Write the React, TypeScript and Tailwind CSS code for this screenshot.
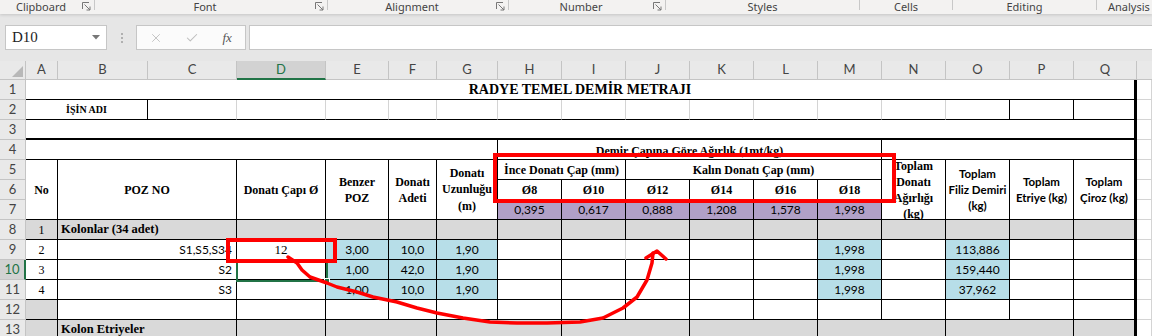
import type { ReactNode } from "react";
import { Check, X } from "lucide-react";
import { twMerge } from "tailwind-merge";

const SERIF = "font-['Liberation_Serif',serif]";
const SANS = "font-['Lato',sans-serif]";
const BLK = "border-r-black border-b-black";
const THICK = "border-b-black border-r-[3px] border-r-black";
const HDR = "font-bold text-[12px]";

const COLS = ["A", "B", "C", "D", "E", "F", "G", "H", "I", "J", "K", "L", "M", "N", "O", "P", "Q"];

function Cell({ className = "", children }: { className?: string; children?: ReactNode }) {
  return (
    <div
      className={twMerge(
        "flex min-w-0 items-center justify-center overflow-hidden whitespace-nowrap border-b border-r border-[#d4d4d4] text-black",
        className
      )}
    >
      {children}
    </div>
  );
}

function RowHead({ n, active = false }: { n: number; active?: boolean }) {
  return (
    <div
      className={twMerge(
        `flex items-center justify-center border-b border-r border-[#c4c4c4] bg-[#e9e9e9] text-[13px] text-[#444] ${SANS}`,
        active && "border-r-2 border-r-[#217346] bg-[#d2d2d2] text-[#217346]"
      )}
    >
      {n}
    </div>
  );
}

function Launcher() {
  return (
    <svg width="9" height="9" viewBox="0 0 9 9" className="shrink-0 text-[#777]">
      <path d="M0.5 7V0.5H7" fill="none" stroke="currentColor" />
      <path d="M2.5 2.5L8 8M8 4.5V8H4.5" fill="none" stroke="currentColor" />
    </svg>
  );
}

function Group({ label, w, launcher = true, last = false }: { label: string; w: string; launcher?: boolean; last?: boolean }) {
  return (
    <div className={`flex h-full items-start ${w}`}>
      <span className={`flex-1 leading-[13px] ${last ? "pl-[11px] text-left" : "text-center"}`}>{label}</span>
      {launcher && (
        <span className="mr-[3px] mt-[2px] flex">
          <Launcher />
        </span>
      )}
      {!last && <span className="h-[10px] w-px bg-[#c8c8c8]" />}
    </div>
  );
}

const dataRows = [
  { n: 9, no: "2", poz: "S1,S5,S34", cap: "12", benzer: "3,00", adet: "10,0", uz: "1,90", m: "1,998", o: "113,886" },
  { n: 10, no: "3", poz: "S2", cap: "", benzer: "1,00", adet: "42,0", uz: "1,90", m: "1,998", o: "159,440" },
  { n: 11, no: "4", poz: "S3", cap: "", benzer: "1,00", adet: "10,0", uz: "1,90", m: "1,998", o: "37,962" },
];

const BLUE = "bg-[#b7dee8]";
const GRAY = "bg-[#d9d9d9]";
const MIDCOLS = ["D", "E", "F", "G", "H", "I", "J", "K", "L", "M", "N", "O", "P"];

export default function App() {
  return (
    <div className={`relative h-[336px] w-[1152px] overflow-hidden bg-white ${SANS}`}>
      {/* ribbon group labels */}
      <div className="relative z-10 flex h-[14px] bg-[#f3f2f1] font-['Noto_Sans',sans-serif] text-[11px] text-[#444] shadow-[0_1px_3px_rgba(0,0,0,0.15)]">
        <Group label="Clipboard" w="w-[95px]" />
        <Group label="Font" w="w-[233px]" />
        <Group label="Alignment" w="w-[181px]" />
        <Group label="Number" w="w-[157px]" />
        <Group label="Styles" w="w-[194px]" launcher={false} />
        <Group label="Cells" w="w-[93px]" launcher={false} />
        <Group label="Editing" w="w-[144px]" launcher={false} />
        <Group label="Analysis" w="flex-1" launcher={false} last />
      </div>

      {/* formula bar */}
      <div className="flex h-[47px] items-start bg-[#e6e6e6] pt-[11px]">
        <div className="ml-[5px] flex h-[25px] w-[102px] items-center justify-between border border-[#c6c6c6] bg-white pl-[6px] pr-[6px]">
          <span className={`${SERIF} text-[15px] text-[#222]`}>D10</span>
          <svg width="8" height="5" viewBox="0 0 8 5"><path d="M0 0H8L4 4.5Z" fill="#777" /></svg>
        </div>
        <div className="ml-[14px] mt-[8px] flex flex-col gap-[2px]">
          <span className="h-[2px] w-[2px] bg-[#b0b0b0]" />
          <span className="h-[2px] w-[2px] bg-[#b0b0b0]" />
          <span className="h-[2px] w-[2px] bg-[#b0b0b0]" />
        </div>
        <div className="ml-[13px] flex h-[25px] w-[110px] items-center border border-[#c6c6c6] bg-[#fbfbfb] pl-[1px]">
          <span className="flex w-[36px] justify-center"><X size={14} strokeWidth={1.5} color="#bdbdbd" /></span>
          <span className="flex w-[36px] justify-center"><Check size={14} strokeWidth={1.8} color="#bdbdbd" /></span>
          <span className={`flex w-[36px] justify-center ${SERIF} text-[13px] italic text-[#555]`}>fx</span>
        </div>
        <div className="ml-[3px] h-[25px] flex-1 border border-r-0 border-[#c6c6c6] bg-white" />
      </div>

      {/* sheet */}
      <div className="grid grid-cols-[26px_32px_90px_89px_89px_63px_48px_61px_64px_64px_64px_64px_64px_64px_64px_64px_64px_63px_15px] grid-rows-[19px_repeat(13,20px)]">
        {/* column headers */}
        <div className="relative border-b border-r border-[#c4c4c4] bg-[#e9e9e9]">
          <svg width="11" height="11" viewBox="0 0 11 11" className="absolute bottom-[2px] right-[2px]">
            <path d="M11 0V11H0Z" fill="#b8b8b8" />
          </svg>
        </div>
        {COLS.map((c) => (
          <div
            key={c}
            className={twMerge(
              "flex items-center justify-center border-b border-r border-[#c4c4c4] bg-[#e9e9e9] text-[13px] text-[#444]",
              c === "D" && "border-b-2 border-b-[#217346] bg-[#d2d2d2] text-[#217346]"
            )}
          >
            {c}
          </div>
        ))}
        <div className="border-b border-[#c4c4c4] bg-[#e9e9e9]" />

        {/* row 1 */}
        <RowHead n={1} />
        <Cell className={`col-span-17 ${SERIF} text-[14px] font-bold ${THICK}`}>RADYE TEMEL DEMİR METRAJI</Cell>
        <Cell />

        {/* row 2 */}
        <RowHead n={2} />
        <Cell className={`col-span-2 ${SERIF} text-[10px] font-bold ${BLK}`}>İŞİN ADI</Cell>
        {["C", "D", "E", "F", "G", "H", "I", "J", "K", "L", "M", "N"].map((c) => (
          <Cell key={c} className="border-b-black" />
        ))}
        <Cell className={BLK} />
        <Cell className={BLK} />
        <Cell className={THICK} />
        <Cell />

        {/* row 3 */}
        <RowHead n={3} />
        <Cell className="col-span-17 border-b-2 border-b-black border-r-[3px] border-r-black" />
        <Cell />

        {/* row 4 */}
        <RowHead n={4} />
        <Cell className={`col-span-7 ${BLK}`} />
        <Cell className={`col-span-6 items-end pb-0 leading-[15px] ${SERIF} ${HDR} ${BLK}`}>
          <span className="translate-y-[1px]">Demir Çapına Göre Ağırlık (1mt/kg)</span>
        </Cell>
        <Cell className={`col-span-4 ${THICK}`} />
        <Cell />

        {/* rows 5-7 header */}
        <RowHead n={5} />
        <Cell className={`row-span-3 ${SERIF} ${HDR} ${BLK}`}>No</Cell>
        <Cell className={`col-span-2 row-span-3 ${SERIF} ${HDR} ${BLK}`}>POZ NO</Cell>
        <Cell className={`row-span-3 ${SERIF} ${HDR} ${BLK}`}>Donatı Çapı Ø</Cell>
        <Cell className={`row-span-3 ${SERIF} ${HDR} ${BLK}`}>
          <div className="text-center leading-[16px]">Benzer<br />POZ</div>
        </Cell>
        <Cell className={`row-span-3 ${SERIF} ${HDR} ${BLK}`}>
          <div className="text-center leading-[16px]">Donatı<br />Adeti</div>
        </Cell>
        <Cell className={`row-span-3 ${SERIF} ${HDR} ${BLK}`}>
          <div className="text-center leading-[16.5px]">Donatı<br />Uzunluğu<br />(m)</div>
        </Cell>
        <Cell className={`col-span-2 ${SERIF} ${HDR} ${BLK}`}>İnce Donatı Çap (mm)</Cell>
        <Cell className={`col-span-4 ${SERIF} ${HDR} ${BLK}`}>Kalın Donatı Çap (mm)</Cell>
        <Cell className={`row-span-3 ${SERIF} ${HDR} ${BLK}`}>
          <div className="text-center leading-[16px]">Toplam<br />Donatı<br />Ağırlığı<br />(kg)</div>
        </Cell>
        <Cell className={`row-span-3 text-[11.5px] font-bold ${BLK}`}>
          <div className="text-center leading-[16px]">Toplam<br />Filiz Demiri<br />(kg)</div>
        </Cell>
        <Cell className={`row-span-3 text-[11.5px] font-bold ${BLK}`}>
          <div className="text-center leading-[16px]">Toplam<br />Etriye (kg)</div>
        </Cell>
        <Cell className={`row-span-3 text-[11.5px] font-bold ${THICK}`}>
          <div className="text-center leading-[16px]">Toplam<br />Çiroz (kg)</div>
        </Cell>
        <Cell />

        <RowHead n={6} />
        {["Ø8", "Ø10", "Ø12", "Ø14", "Ø16", "Ø18"].map((d) => (
          <Cell key={d} className={`${SERIF} ${HDR} ${BLK}`}>{d}</Cell>
        ))}
        <Cell />

        <RowHead n={7} />
        {["0,395", "0,617", "0,888", "1,208", "1,578", "1,998"].map((v) => (
          <Cell key={v} className={`bg-[#b1a0c7] text-[12px] ${BLK}`}>{v}</Cell>
        ))}
        <Cell />

        {/* row 8 */}
        <RowHead n={8} />
        <Cell className={`${GRAY} ${SERIF} text-[12px] ${BLK}`}>1</Cell>
        <Cell className={`col-span-2 justify-start pl-[3px] ${GRAY} ${SERIF} text-[12.5px] font-bold ${BLK}`}>Kolonlar (34 adet)</Cell>
        {MIDCOLS.map((c) => (
          <Cell key={c} className={`${GRAY} ${BLK}`} />
        ))}
        <Cell className={`${GRAY} ${THICK}`} />
        <Cell />

        {/* rows 9-11 */}
        {dataRows.map((r) => (
          <div key={r.n} className="contents">
            <RowHead n={r.n} active={r.n === 10} />
            <Cell className={`${SERIF} text-[12px] ${BLK}`}>{r.no}</Cell>
            <Cell className={`col-span-2 justify-end pr-[4px] text-[12px] ${BLK}`}>{r.poz}</Cell>
            <Cell className={`${SERIF} text-[13px] ${BLK}`}>{r.cap}</Cell>
            <Cell className={`${BLUE} text-[12px] ${BLK}`}>{r.benzer}</Cell>
            <Cell className={`${BLUE} text-[12px] ${BLK}`}>{r.adet}</Cell>
            <Cell className={`${BLUE} text-[12px] ${BLK}`}>{r.uz}</Cell>
            <Cell className={BLK} />
            <Cell className={r.n === 9 ? "border-b-black" : BLK} />
            <Cell className={BLK} />
            <Cell className={BLK} />
            <Cell className={BLK} />
            <Cell className={`${BLUE} text-[12px] ${BLK}`}>{r.m}</Cell>
            <Cell className={BLK} />
            <Cell className={`${BLUE} text-[12px] ${BLK}`}>{r.o}</Cell>
            <Cell className={BLK} />
            <Cell className={THICK} />
            <Cell />
          </div>
        ))}

        {/* row 12 */}
        <RowHead n={12} />
        <Cell className={`${GRAY} ${BLK}`} />
        <Cell className={`col-span-2 ${BLK}`} />
        {MIDCOLS.map((c) => (
          <Cell key={c} className={BLK} />
        ))}
        <Cell className={THICK} />
        <Cell />

        {/* row 13 */}
        <RowHead n={13} />
        <Cell className={`${GRAY} ${BLK}`} />
        <Cell className={`col-span-2 justify-start pl-[3px] ${GRAY} ${SERIF} text-[12.5px] font-bold ${BLK}`}>Kolon Etriyeler</Cell>
        <Cell className={`${GRAY} ${BLK}`} />
        <Cell className={`col-span-2 ${GRAY} ${BLK}`} />
        <Cell className={`col-span-2 ${GRAY} ${BLK}`} />
        <Cell className={`col-span-2 ${GRAY} ${BLK}`} />
        <Cell className={`col-span-2 ${GRAY} ${BLK}`} />
        <Cell className={`col-span-2 ${GRAY} ${BLK}`} />
        <Cell className={`col-span-2 ${GRAY} ${BLK}`} />
        <Cell className={`${GRAY} ${THICK}`} />
        <Cell />
      </div>

      {/* active cell D10 */}
      <div className="pointer-events-none absolute left-[236px] top-[260px] h-[22px] w-[92px] border-2 border-[#217346]" />
      <div className="pointer-events-none absolute left-[324px] top-[278px] h-[6px] w-[6px] border border-white bg-[#217346]" />

      {/* red annotations */}
      <svg className="pointer-events-none absolute left-0 top-0" width="1152" height="336" viewBox="0 0 1152 336">
        <g fill="none" stroke="#ff0000" strokeWidth="4" strokeLinejoin="round" strokeLinecap="round">
          <rect x="228" y="240" width="107" height="21" strokeLinecap="butt" strokeLinejoin="miter" />
          <rect x="495" y="155" width="399" height="46" strokeLinecap="butt" strokeLinejoin="miter" />
          <polyline
            strokeWidth="3.5"
            points="288,257 297,263 302,270 310,277 327,283 337,287 357,292 373,297 397,302 417,308 437,313 463,318 490,322 517,323 547,323 580,322 603,318 623,308 637,297 647,280 652,263 653,253"
          />
          <polyline strokeWidth="3.5" points="646,258 657,251 666,259" />
        </g>
      </svg>
    </div>
  );
}
